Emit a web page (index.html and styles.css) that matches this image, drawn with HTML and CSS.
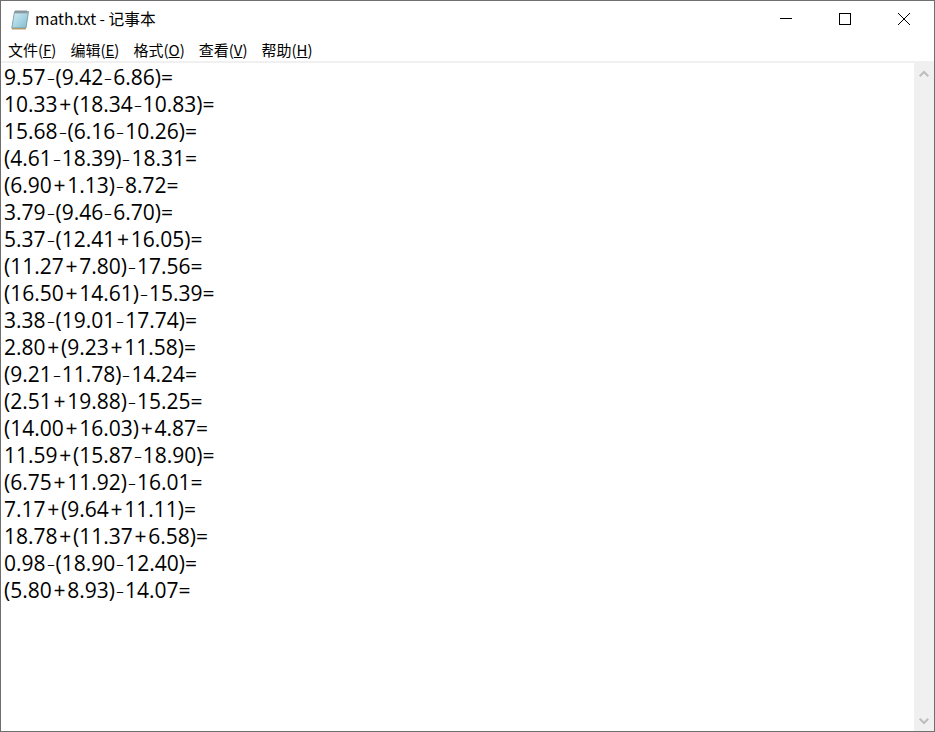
FILE: index.html
```html
<!DOCTYPE html>
<html lang="zh">
<head>
<meta charset="utf-8">
<title>math.txt - 记事本</title>
<link rel="stylesheet" href="styles.css">
</head>
<body>
<div class="window">
  <header class="titlebar">
    <svg class="app-icon" width="18" height="21" viewBox="0 0 18 21">
      <defs><linearGradient id="pg" x1="0" y1="0" x2="1" y2="1"><stop offset="0" stop-color="#d6eef5"/><stop offset="0.55" stop-color="#a5d4e3"/><stop offset="1" stop-color="#82b9cb"/></linearGradient></defs>
      <path d="M3.5 2.5 H17.5 L15 19 H0.8 Z" fill="url(#pg)" stroke="#6d8f9c" stroke-width="0.8"/>
      <path d="M0.8 19 H15 L14.7 20.5 H0.8 Z" fill="#b59a6a"/>
      <path d="M3.5 2.5 H17.5 L17.1 4.6 H3.1 Z" fill="#9aa7ad"/>
      <path d="M5 1V4M7 1V4M9 1V4M11 1V4M13 1V4M15 1V4" stroke="#7b8a91" stroke-width="0.9"/>
    </svg>
    <span class="title">math.txt - 记事本</span>
    <div class="controls">
      <span class="ctl"><svg width="12" height="12" viewBox="0 0 12 12"><path d="M0 5.5H12" stroke="#000" stroke-width="1"/></svg></span>
      <span class="ctl"><svg width="12" height="12" viewBox="0 0 12 12"><rect x="0.5" y="0.5" width="11" height="11" fill="none" stroke="#000"/></svg></span>
      <span class="ctl"><svg width="12" height="12" viewBox="0 0 12 12"><path d="M0 0L12 12M12 0L0 12" stroke="#000" stroke-width="1"/></svg></span>
    </div>
  </header>
  <nav class="menubar">
    <span class="menu">文件(<u>F</u>)</span>
    <span class="menu">编辑(<u>E</u>)</span>
    <span class="menu">格式(<u>O</u>)</span>
    <span class="menu">查看(<u>V</u>)</span>
    <span class="menu">帮助(<u>H</u>)</span>
  </nav>
  <main class="content">
    <pre class="text">9.57<b class="m">-</b>(9.42<b class="m">-</b>6.86)<b class="e">=</b>
10.33<b class="p">+</b>(18.34<b class="m">-</b>10.83)<b class="e">=</b>
15.68<b class="m">-</b>(6.16<b class="m">-</b>10.26)<b class="e">=</b>
(4.61<b class="m">-</b>18.39)<b class="m">-</b>18.31<b class="e">=</b>
(6.90<b class="p">+</b>1.13)<b class="m">-</b>8.72<b class="e">=</b>
3.79<b class="m">-</b>(9.46<b class="m">-</b>6.70)<b class="e">=</b>
5.37<b class="m">-</b>(12.41<b class="p">+</b>16.05)<b class="e">=</b>
(11.27<b class="p">+</b>7.80)<b class="m">-</b>17.56<b class="e">=</b>
(16.50<b class="p">+</b>14.61)<b class="m">-</b>15.39<b class="e">=</b>
3.38<b class="m">-</b>(19.01<b class="m">-</b>17.74)<b class="e">=</b>
2.80<b class="p">+</b>(9.23<b class="p">+</b>11.58)<b class="e">=</b>
(9.21<b class="m">-</b>11.78)<b class="m">-</b>14.24<b class="e">=</b>
(2.51<b class="p">+</b>19.88)<b class="m">-</b>15.25<b class="e">=</b>
(14.00<b class="p">+</b>16.03)<b class="p">+</b>4.87<b class="e">=</b>
11.59<b class="p">+</b>(15.87<b class="m">-</b>18.90)<b class="e">=</b>
(6.75<b class="p">+</b>11.92)<b class="m">-</b>16.01<b class="e">=</b>
7.17<b class="p">+</b>(9.64<b class="p">+</b>11.11)<b class="e">=</b>
18.78<b class="p">+</b>(11.37<b class="p">+</b>6.58)<b class="e">=</b>
0.98<b class="m">-</b>(18.90<b class="m">-</b>12.40)<b class="e">=</b>
(5.80<b class="p">+</b>8.93)<b class="m">-</b>14.07<b class="e">=</b></pre>
    <aside class="scrollbar">
      <svg width="10" height="7" viewBox="0 0 10 7"><path d="M0.7 6.3L5 2L9.3 6.3" fill="none" stroke="#bdbdbd" stroke-width="2"/></svg>
      <svg width="10" height="7" viewBox="0 0 10 7"><path d="M0.7 0.7L5 5L9.3 0.7" fill="none" stroke="#bdbdbd" stroke-width="2"/></svg>
    </aside>
  </main>
</div>
</body>
</html>
```
FILE: styles.css
```css
* { box-sizing: border-box; }
html, body { margin: 0; height: 100%; }
body { background: #fff; overflow: hidden; }
.window {
  width: 935px; height: 732px;
  border: 1px solid #6f6f6f;
  display: flex; flex-direction: column;
  background: #fff;
  font-family: "Noto Sans CJK SC", "Noto Sans", sans-serif;
}
.titlebar {
  height: 37px; flex: none;
  display: flex; align-items: center;
  padding: 0 0 1px 10px;
}
.app-icon { flex: none; }
.title { margin-left: 6px; font-size: 15.7px; color: #000; line-height: 20px; }
.controls { margin-left: auto; display: flex; align-self: flex-start; padding-right: 1px; }
.ctl { width: 59px; height: 36px; display: flex; align-items: center; justify-content: center; }
.menubar {
  height: 25px; flex: none;
  display: flex; align-items: center;
  padding-left: 7px; gap: 14px;
  font-size: 15px; color: #000;
  border-bottom: 2px solid #f0f0f0;
}
.menu { white-space: nowrap; }
.content { flex: 1; display: flex; min-height: 0; }
.text {
  flex: 1; margin: 0; padding: 1px 0 0 3px;
  font-family: "Open Sans", "Noto Sans", sans-serif;
  font-size: 21px; line-height: 27px; color: #000;
}
.text b { font-weight: 400; display: inline-block; text-align: center; }
.text .m { width: 10px; transform: scaleX(1.25); font-weight: 300; }
.text .p { width: 15.5px; }
.text .e { width: 11.5px; }
.scrollbar {
  width: 20px; flex: none; background: #f0f0f0;
  display: flex; flex-direction: column; justify-content: space-between; align-items: center;
  padding: 7px 0 6px;
}
```
